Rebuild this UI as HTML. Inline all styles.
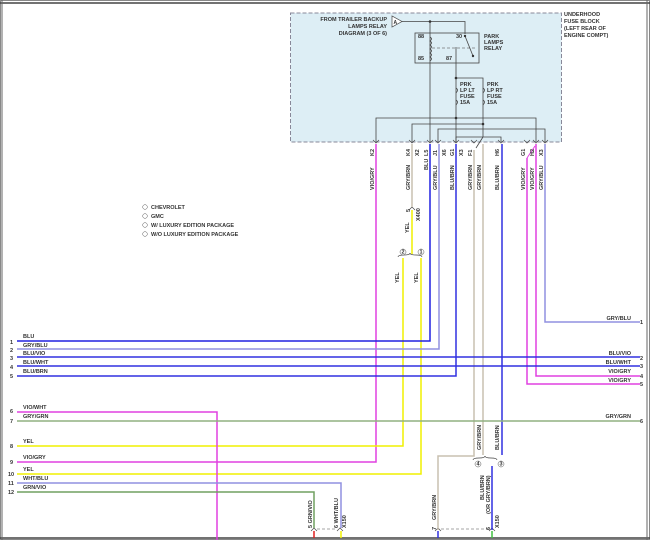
<!DOCTYPE html>
<html><head><meta charset="utf-8"><style>
html,body{margin:0;padding:0;background:#fff}
svg{display:block}
text{font-family:"Liberation Sans",sans-serif;font-size:5.5px;fill:#333;font-weight:bold}
</style></head><body>
<svg width="650" height="540" viewBox="0 0 650 540" xmlns="http://www.w3.org/2000/svg">
<rect x="0.5" y="0.5" width="649" height="539" fill="#fff" stroke="#888"/>
<line x1="0" y1="3" x2="650" y2="3" stroke="#444" stroke-width="1.5"/>
<line x1="0" y1="538" x2="650" y2="538" stroke="#444" stroke-width="1.5"/>
<line x1="2" y1="0" x2="2" y2="540" stroke="#666"/>
<line x1="647" y1="0" x2="647" y2="540" stroke="#666"/>
<!-- fuse block -->
<rect x="290.5" y="13" width="271" height="129" fill="#ddeef5" stroke="#889" stroke-dasharray="4,2"/>
<text x="564" y="16">UNDERHOOD</text><text x="564" y="23">FUSE BLOCK</text><text x="564" y="30">(LEFT REAR OF</text><text x="564" y="37">ENGINE COMPT)</text>
<text x="387" y="21" text-anchor="end">FROM TRAILER BACKUP</text>
<text x="387" y="28" text-anchor="end">LAMPS RELAY</text>
<text x="387" y="35" text-anchor="end">DIAGRAM (3 OF 6)</text>
<polygon points="392,16 392,27 402,21.5" fill="#fff" stroke="#444" stroke-width="0.7"/>
<text x="393.5" y="24" style="font-size:5px">A</text>
<g stroke="#444" stroke-width="0.8" fill="none">
<polyline points="402,21.5 465,21.5 465,34"/>
<line x1="430" y1="21.5" x2="430" y2="142"/>
<rect x="415" y="33" width="64" height="30"/>
<line x1="432" y1="48" x2="476" y2="48" stroke-dasharray="3,2" stroke="#777"/>
<path d="M430,37 q3,2 0,4 q3,2 0,4 q3,2 0,4 q3,2 0,4 q3,2 0,4 q3,2 0,4"/>
<line x1="465" y1="36" x2="473" y2="56"/>
<line x1="456" y1="47" x2="456" y2="142"/>
<polyline points="456,78 483,78 483,137"/>
<path d="M456,88 q3,2 0,5 M483,88 q3,2 0,5"/>
<path d="M456,100 q3,2 0,5 M483,100 q3,2 0,5"/>
<polyline points="376,142 376,118 536,118 536,142"/>
<polyline points="412,142 412,124 483,124"/>
<polyline points="438,142 438,129 545,129 545,142"/>
<polyline points="456,142 456,137 501,137 501,142"/>
<line x1="483" y1="137" x2="476" y2="148"/>
</g>
<g fill="#333"><circle cx="430" cy="21.5" r="1.3"/><circle cx="456" cy="78" r="1.3"/><circle cx="456" cy="118" r="1.3"/><circle cx="483" cy="124" r="1.3"/><circle cx="473" cy="56" r="1.2"/><circle cx="465" cy="36" r="1.2"/></g>
<text x="418" y="38">88</text><text x="456" y="38">30</text><text x="418" y="60">85</text><text x="446" y="60">87</text>
<text x="484" y="38">PARK</text><text x="484" y="44">LAMPS</text><text x="484" y="50">RELAY</text>
<text x="460" y="86">PRK</text><text x="460" y="92">LP LT</text><text x="460" y="98">FUSE</text><text x="460" y="104">15A</text>
<text x="487" y="86">PRK</text><text x="487" y="92">LP RT</text><text x="487" y="98">FUSE</text><text x="487" y="104">15A</text>
<!-- connector chevrons -->
<g stroke="#444" stroke-width="0.7" fill="none">
<path d="M373,140 l3,3 l3,-3 M409,140 l3,3 l3,-3 M427,140 l3,3 l3,-3 M435,140 l3,3 l3,-3 M453,140 l3,3 l3,-3 M471,140 l3,3 l3,-3 M498,140 l3,3 l3,-3 M524,140 l3,3 l3,-3 M533,140 l3,3 l3,-3 M542,140 l3,3 l3,-3"/>
<path d="M409,210 l3,-3 l3,3 M311,531 l3,-3 l3,3 M337,531 l3,-3 l3,3 M435,531 l3,-3 l3,3 M489,531 l3,-3 l3,3"/>
<line x1="317" y1="529" x2="337" y2="529" stroke-dasharray="3,2" stroke="#888"/>
<line x1="441" y1="529" x2="489" y2="529" stroke-dasharray="3,2" stroke="#888"/>
<path d="M398,257 q0,-2 6,-2 q6,0 6,-2 q0,2 6,2 q6,0 6,2" />
<path d="M473,460 q0,-2 6,-2 q6,0 6,-2 q0,2 6,2 q6,0 6,2" />
</g>
<!-- wires -->
<g fill="none" stroke-width="1.5">
<polyline stroke="#e040e0" points="376,144 376,462 17,462"/>
<polyline stroke="#c8c0b0" points="412,144 412,207"/>
<polyline stroke="#f0f000" points="412,210 412,254"/>
<polyline stroke="#f0f000" points="403,258 403,446 17,446"/>
<polyline stroke="#f0f000" points="421,258 421,474 17,474"/>
<polyline stroke="#2020e0" points="430,144 430,341 17,341"/>
<polyline stroke="#9090e0" points="439,144 439,349 17,349"/>
<polyline stroke="#3030e0" points="456,144 456,376 17,376"/>
<polyline stroke="#c8c0b0" points="474,150 474,456 438,456 438,530"/>
<polyline stroke="#c8c0b0" points="483,144 483,455"/>
<polyline stroke="#3030e0" points="502,144 502,455"/>
<polyline stroke="#3030e0" points="492,466 492,530"/>
<polyline stroke="#e040e0" points="527,158 527,384 640,384"/>
<line stroke="#e040e0" x1="527" y1="158" x2="535" y2="146" stroke-width="1"/>
<polyline stroke="#e040e0" points="536,144 536,376 640,376"/>
<polyline stroke="#9090e0" points="545,144 545,322 640,322"/>
<line stroke="#3030e0" x1="17" y1="357" x2="640" y2="357"/>
<line stroke="#3030e0" x1="17" y1="366" x2="640" y2="366"/>
<polyline stroke="#e040e0" points="17,412 217,412 217,540"/>
<line stroke="#90b080" x1="17" y1="421" x2="640" y2="421"/>
<polyline stroke="#9090e0" points="17,483 341,483 341,528"/>
<polyline stroke="#70a060" points="17,492 314,492 314,528"/>
<line stroke="#e02020" x1="314" y1="531" x2="314" y2="538"/>
<line stroke="#f0f000" x1="341" y1="531" x2="341" y2="538"/>
<line stroke="#3030e0" x1="438" y1="531" x2="438" y2="538"/>
<line stroke="#40c040" x1="492" y1="531" x2="492" y2="538"/>
</g>
<!-- vertical labels -->
<g>
<text transform="translate(374,190) rotate(-90)">VIO/GRY</text>
<text transform="translate(374,156) rotate(-90)">K2</text>
<text transform="translate(410,190) rotate(-90)">GRY/BRN</text>
<text transform="translate(410,156) rotate(-90)">K4</text>
<text transform="translate(419,156) rotate(-90)">X2</text>
<text transform="translate(410,212) rotate(-90)">5</text>
<text transform="translate(420,221) rotate(-90)">X400</text>
<text transform="translate(409,233) rotate(-90)">YEL</text>
<text transform="translate(399,283) rotate(-90)">YEL</text>
<text transform="translate(418,283) rotate(-90)">YEL</text>
<text transform="translate(428,170) rotate(-90)">BLU</text>
<text transform="translate(428,156) rotate(-90)">L5</text>
<text transform="translate(437,190) rotate(-90)">GRY/BLU</text>
<text transform="translate(437,156) rotate(-90)">J1</text>
<text transform="translate(446,156) rotate(-90)">X6</text>
<text transform="translate(454,190) rotate(-90)">BLU/BRN</text>
<text transform="translate(454,156) rotate(-90)">G1</text>
<text transform="translate(463,156) rotate(-90)">X3</text>
<text transform="translate(472,156) rotate(-90)">F1</text>
<text transform="translate(472,190) rotate(-90)">GRY/BRN</text>
<text transform="translate(481,190) rotate(-90)">GRY/BRN</text>
<text transform="translate(499,190) rotate(-90)">BLU/BRN</text>
<text transform="translate(499,156) rotate(-90)">H6</text>
<text transform="translate(525,190) rotate(-90)">VIO/GRY</text>
<text transform="translate(525,156) rotate(-90)">G1</text>
<text transform="translate(534,190) rotate(-90)">VIO/GRY</text>
<text transform="translate(534,156) rotate(-90)">H2</text>
<text transform="translate(543,190) rotate(-90)">GRY/BLU</text>
<text transform="translate(543,156) rotate(-90)">X3</text>
<text transform="translate(481,450) rotate(-90)">GRY/BRN</text>
<text transform="translate(499,450) rotate(-90)">BLU/BRN</text>
<text transform="translate(436,520) rotate(-90)">GRY/BRN</text>
<text transform="translate(484,500) rotate(-90)">BLU/BRN</text>
<text transform="translate(490,514) rotate(-90)">(OR GRY/BRN)</text>
<text transform="translate(499,528) rotate(-90)">X150</text>
<text transform="translate(436,530) rotate(-90)">7</text>
<text transform="translate(490,530) rotate(-90)">6</text>
<text transform="translate(312,528) rotate(-90)">5 GRN/VIO</text>
<text transform="translate(338,528) rotate(-90)">6 WHT/BLU</text>
<text transform="translate(346,528) rotate(-90)">X150</text>
</g>
<g stroke="#555" stroke-width="0.5" fill="#fff">
<circle cx="403" cy="252" r="3"/><circle cx="421" cy="252" r="3"/>
<circle cx="478" cy="464" r="3"/><circle cx="501" cy="464" r="3"/>
</g>
<g style="font-size:4px"><text x="401.5" y="253.5">2</text><text x="419.5" y="253.5">1</text><text x="476.5" y="465.5">4</text><text x="499.5" y="465.5">3</text></g>
<!-- legend -->
<g>
<circle cx="145" cy="207" r="2.3" fill="none" stroke="#555" stroke-width="0.5"/><text x="151" y="209">CHEVROLET</text>
<circle cx="145" cy="216" r="2.3" fill="none" stroke="#555" stroke-width="0.5"/><text x="151" y="218">GMC</text>
<circle cx="145" cy="225" r="2.3" fill="none" stroke="#555" stroke-width="0.5"/><text x="151" y="227">W/ LUXURY EDITION PACKAGE</text>
<circle cx="145" cy="234" r="2.3" fill="none" stroke="#555" stroke-width="0.5"/><text x="151" y="236">W/O LUXURY EDITION PACKAGE</text>
</g>
<!-- left labels -->
<g>
<text x="23" y="338">BLU</text><text x="10" y="344">1</text>
<text x="23" y="347">GRY/BLU</text><text x="10" y="352">2</text>
<text x="23" y="355">BLU/VIO</text><text x="10" y="360">3</text>
<text x="23" y="364">BLU/WHT</text><text x="10" y="369">4</text>
<text x="23" y="373">BLU/BRN</text><text x="10" y="378">5</text>
<text x="23" y="409">VIO/WHT</text><text x="10" y="413">6</text>
<text x="23" y="418">GRY/GRN</text><text x="10" y="423">7</text>
<text x="23" y="443">YEL</text><text x="10" y="448">8</text>
<text x="23" y="459">VIO/GRY</text><text x="10" y="464">9</text>
<text x="23" y="471">YEL</text><text x="8" y="476">10</text>
<text x="23" y="480">WHT/BLU</text><text x="8" y="485">11</text>
<text x="23" y="489">GRN/VIO</text><text x="8" y="494">12</text>
</g>
<g text-anchor="end">
<text x="631" y="320">GRY/BLU</text><text x="643" y="324">1</text>
<text x="631" y="355">BLU/VIO</text><text x="643" y="360">2</text>
<text x="631" y="364">BLU/WHT</text><text x="643" y="368">3</text>
<text x="631" y="373">VIO/GRY</text><text x="643" y="378">4</text>
<text x="631" y="382">VIO/GRY</text><text x="643" y="386">5</text>
<text x="631" y="418">GRY/GRN</text><text x="643" y="423">6</text>
</g>
</svg>
</body></html>
